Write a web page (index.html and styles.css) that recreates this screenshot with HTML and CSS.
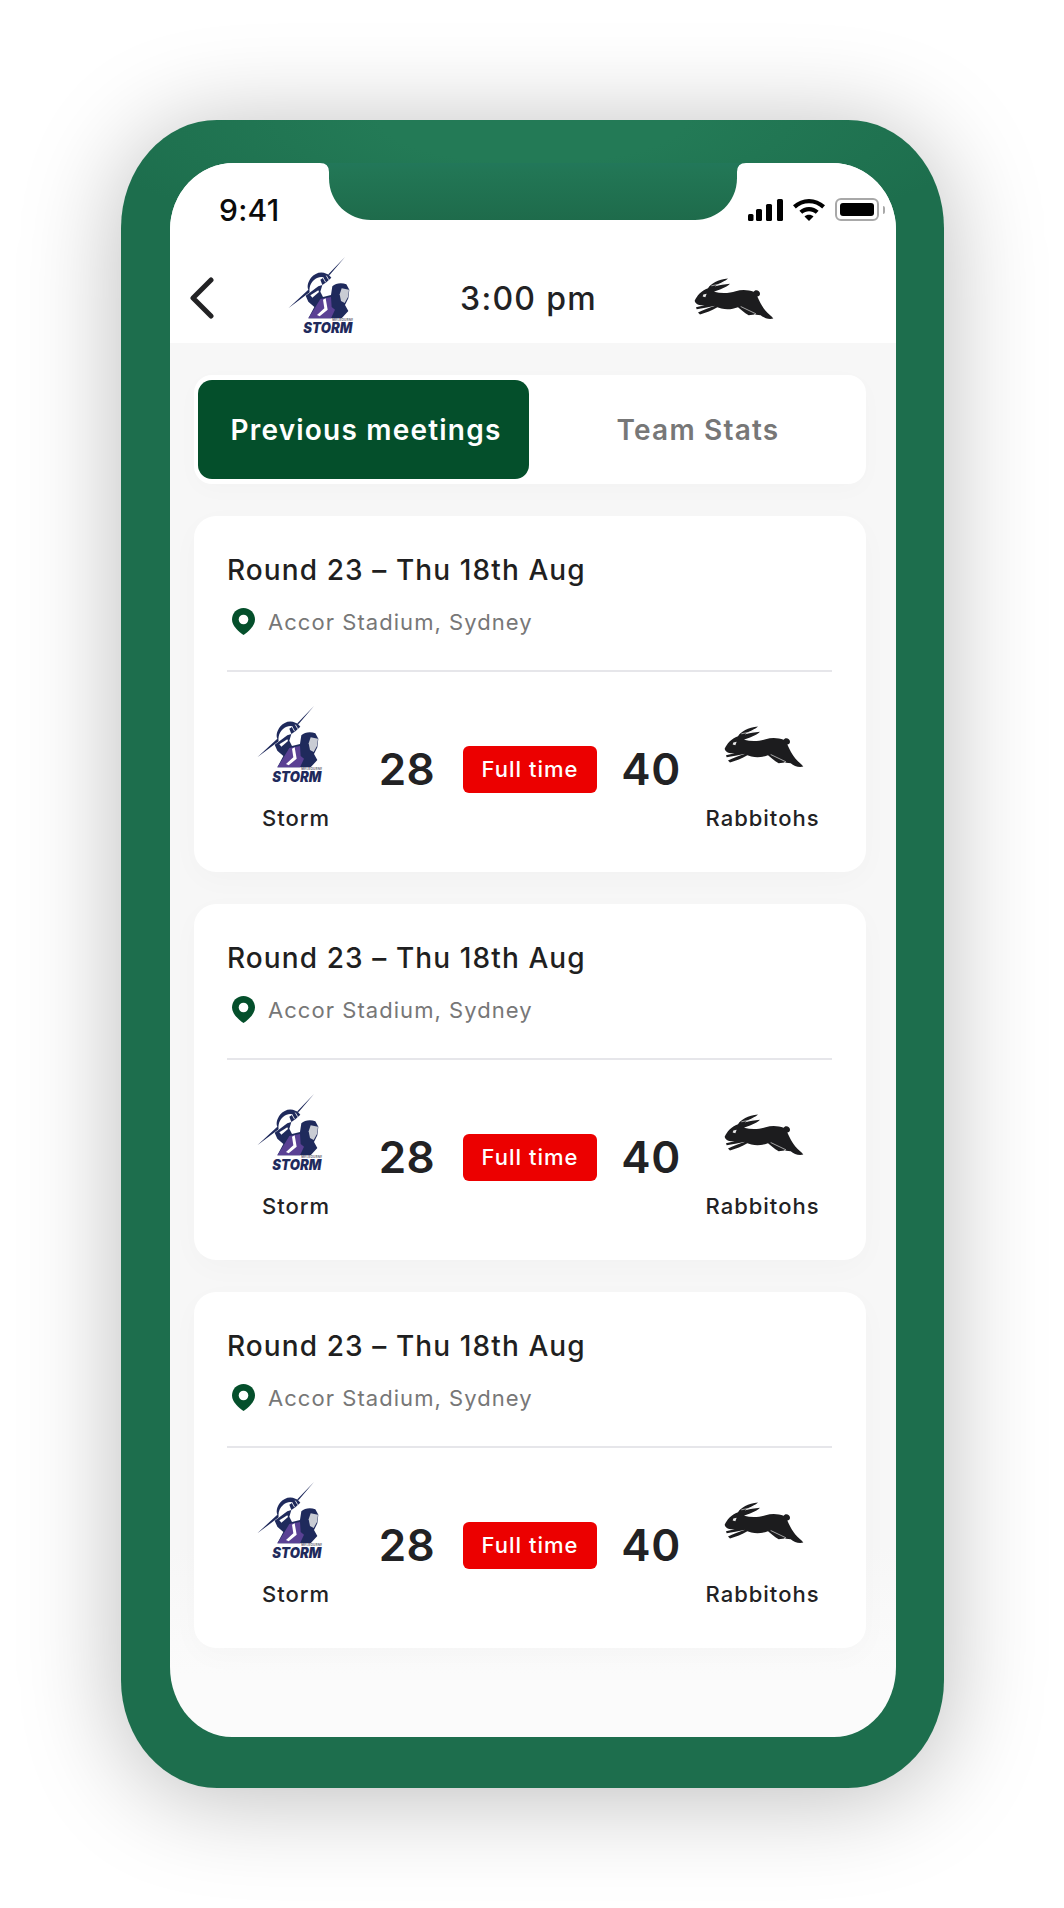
FILE: index.html
```html
<!DOCTYPE html>
<html lang="en">
<head>
<meta charset="utf-8">
<title>Previous meetings</title>
<link rel="stylesheet" href="styles.css">
</head>
<body>
<svg class="defs" width="0" height="0" aria-hidden="true">
  <defs>
    <symbol id="storm" viewBox="195 582 204 240">
      <path fill="#1f2a5c" d="M372 588 L326 642 L316 638 C300 630 282 636 270 650 C260 664 258 676 262 686 L202 742 L266 694 C264 680 268 666 280 656 C290 648 300 646 312 650 Z"/>
      <path fill="#1f2a5c" d="M298 656 L322 640 L331 650 L316 664 L304 672 Z"/>
      <path fill="none" stroke="#fff" stroke-width="2.500" d="M306 650 L314 664 M316 644 L323 656"/>
      <path fill="#1f2a5c" d="M254 704 L292 676 L304 672 L298 692 L306 708 L330 702 L334 676 C344 666 362 664 376 670 L385 686 L382 712 L372 732 L382 750 L362 772 L262 772 L280 738 L262 722 Z"/>
      <path fill="#5a4194" d="M298 714 L330 708 L332 738 L342 746 L330 772 L262 772 L282 740 Z"/>
      <path fill="#c9ccd4" d="M362 682 L384 686 L381 708 L371 726 L360 720 L356 700 Z"/>
      <path fill="#fff" d="M268 703 L292 688 L294 693 L274 710 Z"/>
      <path fill="#fff" d="M306 716 L314 712 L320 746 L296 766 L288 762 L310 742 Z"/>
      <text class="logo-small" x="334" y="781" textLength="62">MELBOURNE</text>
      <text class="logo-word" x="247" y="817" textLength="147" lengthAdjust="spacingAndGlyphs">STORM</text>
    </symbol>
    <symbol id="rabbit" viewBox="40 34 240 128">
      <path fill="#1c1c1e" d="M42 105 C48 90 62 74 82 67 C90 54 112 40 142 38 C134 46 116 52 102 62 C116 58 132 56 148 54 C136 66 114 72 100 78 C124 84 148 82 165 76 C184 70 204 72 219 78 C222 70 238 72 238 84 C238 90 234 92 230 92 C236 106 244 122 254 134 C262 144 272 150 278 158 C264 162 250 156 240 148 C222 148 206 140 192 128 L222 146 L204 148 C190 140 180 130 172 124 C156 130 140 132 122 128 L110 124 C94 134 76 140 58 146 L52 140 C66 134 86 126 104 120 L74 126 L48 130 L46 124 L72 118 C58 120 44 116 42 105 Z"/>
      <path fill="#e8e8e8" d="M68 86 L78 84 L74 94 L66 92 Z"/>
      <path fill="none" stroke="#e8e8e8" stroke-width="2" d="M180 122 L226 144 M92 60 L130 52"/>
    </symbol>
    <symbol id="pin" viewBox="0 0 23 27">
      <path fill="#044f2b" d="M11.5 0 C18 0 23 5 23 11.5 C23 18 16 24 11.5 27 C7 24 0 18 0 11.5 C0 5 5 0 11.5 0 Z"/>
      <circle fill="#fff" cx="11.5" cy="11.5" r="4.8"/>
    </symbol>
    <linearGradient id="notchfill" x1="0" y1="0" x2="0" y2="1">
      <stop offset="0" stop-color="#22775a"/>
      <stop offset="0.15" stop-color="#227655"/>
      <stop offset="1" stop-color="#1e6b4b"/>
    </linearGradient>
  </defs>
</svg>

<div class="stage">
  <div class="phone">
    <div class="screen">
      <svg class="notch" viewBox="0 0 426 57" width="426" height="57" aria-hidden="true">
        <path fill="url(#notchfill)" d="M0 0 Q9 0 9 9 V15 C9 40 29 57 51 57 H375 C397 57 417 40 417 15 V9 Q417 0 426 0 Z"/>
      </svg>

      <header class="top">
        <div class="status">
          <span class="clock">9:41</span>
          <div class="status-icons">
            <svg class="signal" viewBox="0 0 35 22" width="35" height="22" aria-hidden="true">
              <rect x="0" y="15" width="5.5" height="7" rx="1.5"/>
              <rect x="8" y="10" width="6" height="12" rx="1.5"/>
              <rect x="18" y="5" width="6" height="17" rx="1.5"/>
              <rect x="29" y="0" width="6" height="22" rx="1.5"/>
            </svg>
            <svg class="wifi" viewBox="0 0 32 22" width="32" height="22" aria-hidden="true">
              <path d="M16 0 C22 0 27.500 2.300 32 6.300 L29.200 9.400 C25.600 6.200 21 4.300 16 4.300 C11 4.300 6.400 6.200 2.800 9.400 L0 6.300 C4.500 2.300 10 0 16 0 Z"/>
              <path d="M16 8 C19.700 8 23 9.400 25.600 11.700 L22.800 14.800 C21 13.200 18.600 12.200 16 12.200 C13.400 12.200 11 13.200 9.200 14.800 L6.400 11.700 C9 9.400 12.300 8 16 8 Z"/>
              <path d="M16 15.800 C17.800 15.800 19.300 16.400 20.500 17.500 L16 22 L11.500 17.500 C12.700 16.400 14.200 15.800 16 15.800 Z"/>
            </svg>
            <div class="battery"><span class="battery-level"></span></div>
            <span class="battery-nub"></span>
          </div>
        </div>
        <nav class="nav">
          <svg class="back" viewBox="0 0 24 42" width="24" height="42" aria-hidden="true">
            <path d="M21 3 L3 21 L21 39" fill="none" stroke="#222224" stroke-width="5" stroke-linecap="round" stroke-linejoin="round"/>
          </svg>
          <svg class="crest" width="68" height="80" aria-hidden="true"><use href="#storm"/></svg>
          <span class="kick">3:00 pm</span>
          <svg class="hare" width="80" height="43" aria-hidden="true"><use href="#rabbit"/></svg>
        </nav>
      </header>

      <main class="body">
        <div class="tabs">
          <button class="tab tab-on">Previous meetings</button>
          <button class="tab">Team Stats</button>
        </div>

        <article class="card">
          <h2 class="round">Round 23 – Thu 18th Aug</h2>
          <p class="venue"><svg width="23" height="27" aria-hidden="true"><use href="#pin"/></svg>Accor Stadium, Sydney</p>
          <div class="match">
            <div class="team">
              <div class="team-mark"><svg width="68" height="80" aria-hidden="true"><use href="#storm"/></svg></div>
              <span class="team-name">Storm</span>
            </div>
            <span class="score score-home">28</span>
            <span class="badge">Full time</span>
            <span class="score score-away">40</span>
            <div class="team">
              <div class="team-mark team-mark-hare"><svg width="80" height="43" aria-hidden="true"><use href="#rabbit"/></svg></div>
              <span class="team-name">Rabbitohs</span>
            </div>
          </div>
        </article>

        <article class="card">
          <h2 class="round">Round 23 – Thu 18th Aug</h2>
          <p class="venue"><svg width="23" height="27" aria-hidden="true"><use href="#pin"/></svg>Accor Stadium, Sydney</p>
          <div class="match">
            <div class="team">
              <div class="team-mark"><svg width="68" height="80" aria-hidden="true"><use href="#storm"/></svg></div>
              <span class="team-name">Storm</span>
            </div>
            <span class="score score-home">28</span>
            <span class="badge">Full time</span>
            <span class="score score-away">40</span>
            <div class="team">
              <div class="team-mark team-mark-hare"><svg width="80" height="43" aria-hidden="true"><use href="#rabbit"/></svg></div>
              <span class="team-name">Rabbitohs</span>
            </div>
          </div>
        </article>

        <article class="card">
          <h2 class="round">Round 23 – Thu 18th Aug</h2>
          <p class="venue"><svg width="23" height="27" aria-hidden="true"><use href="#pin"/></svg>Accor Stadium, Sydney</p>
          <div class="match">
            <div class="team">
              <div class="team-mark"><svg width="68" height="80" aria-hidden="true"><use href="#storm"/></svg></div>
              <span class="team-name">Storm</span>
            </div>
            <span class="score score-home">28</span>
            <span class="badge">Full time</span>
            <span class="score score-away">40</span>
            <div class="team">
              <div class="team-mark team-mark-hare"><svg width="80" height="43" aria-hidden="true"><use href="#rabbit"/></svg></div>
              <span class="team-name">Rabbitohs</span>
            </div>
          </div>
        </article>
      </main>
    </div>
  </div>
</div>
</body>
</html>
```

FILE: styles.css
```css
* { box-sizing: border-box; }

html, body {
  margin: 0;
  padding: 0;
  background: #fff;
}

body {
  font-family: Inter, "Liberation Sans", sans-serif;
  color: #1f1f21;
}

.defs { position: absolute; }

.logo-small {
  font: 700 9px Inter, sans-serif;
  fill: #6b6b78;
}

.logo-word {
  font: italic 900 42px Inter, sans-serif;
  fill: #1f2a5c;
}

.stage {
  width: 1064px;
  height: 1908px;
  padding: 120px 0 0 121px;
  overflow: hidden;
}

.phone {
  width: 823px;
  height: 1668px;
  padding: 43px 48px 51px 49px;
  border-radius: 96px / 108px;
  background:
    radial-gradient(ellipse 460px 130px at 50% 0, #237a56 0%, #237a56 33%, rgba(35, 122, 86, 0) 100%),
    #1d6e4d;
  box-shadow: 0 8px 100px rgba(0, 0, 0, 0.27);
}

.screen {
  position: relative;
  height: 1574px;
  border-radius: 64px 64px 62px 62px / 67px 67px 70px 70px;
  background: linear-gradient(#f7f7f7 88%, #fbfbfb 96%);
  overflow: hidden;
}

.notch {
  position: absolute;
  top: 0;
  left: 150px;
}

.top {
  background: #fff;
  height: 180px;
}

.status {
  display: flex;
  justify-content: space-between;
  align-items: flex-start;
  height: 90px;
  padding: 29px 11px 0 49px;
}

.clock {
  font-size: 30px;
  line-height: 36px;
  font-weight: 500;
  letter-spacing: 0.3px;
  color: #0b0b0b;
}

.status-icons {
  display: flex;
  align-items: center;
  padding-top: 6px;
}

.signal, .wifi { fill: #000; }

.signal { margin-right: 10px; }

.wifi { margin-right: 10px; }

.battery {
  width: 44px;
  height: 23px;
  padding: 3px;
  border: 2px solid #a8a8a8;
  border-radius: 6px;
}

.battery-level {
  display: block;
  height: 100%;
  border-radius: 3px;
  background: #000;
}

.battery-nub {
  width: 2px;
  height: 8px;
  margin-left: 4px;
  border-radius: 0 2px 2px 0;
  background: #a8a8a8;
}

.nav {
  display: grid;
  grid-template-columns: 96px 68px 340px 80px;
  align-items: center;
  height: 90px;
  padding-left: 20px;
}

.back { margin-top: -1px; }

.crest { margin-top: -7px; }

.kick {
  padding: 2px 0 0 9px;
  text-align: center;
  font-size: 32px;
  line-height: 40px;
  font-weight: 550;
  letter-spacing: 1.3px;
  color: #222224;
}

.hare { margin-top: 1px; }

.body {
  display: flex;
  flex-direction: column;
  gap: 32px;
  padding: 32px 30px 0 24px;
}

.tabs {
  display: grid;
  grid-template-columns: 331px 1fr;
  height: 109px;
  padding: 5px 4px;
  border-radius: 18px;
  background: #fff;
  box-shadow: 0 6px 24px rgba(0, 0, 0, 0.02);
}

.tab {
  border: 0;
  border-radius: 14px;
  background: transparent;
  font-family: inherit;
  font-size: 28px;
  font-weight: 600;
  letter-spacing: 1.2px;
  color: #777;
  padding: 0 0 0 5px;
}

.tab-on {
  background: #044f2b;
  color: #fff;
}

.card {
  height: 356px;
  padding: 38px 34px 0 33px;
  border-radius: 22px;
  background: #fff;
  box-shadow: 0 8px 30px rgba(0, 0, 0, 0.025);
}

.round {
  margin: 0;
  font-size: 28px;
  line-height: 32px;
  font-weight: 550;
  letter-spacing: 1.1px;
  color: #1f1f21;
}

.venue {
  display: flex;
  align-items: center;
  gap: 13px;
  height: 86px;
  margin: 0;
  padding: 0 0 13px 5px;
  border-bottom: 2px solid #e6e6ea;
  font-size: 22px;
  letter-spacing: 1.05px;
  color: #777;
}

.match {
  display: grid;
  grid-template-columns: 138px 98px 134px 96px 1fr;
  align-items: center;
  margin-top: 32px;
}

.team {
  display: flex;
  flex-direction: column;
  align-items: center;
}

.team-mark {
  display: flex;
  align-items: center;
  height: 80px;
  margin: 0 14px 19px 0;
}

.team-mark-hare {
  margin: 2px 0 17px 3px;
}

.team-name {
  font-size: 22px;
  line-height: 30px;
  font-weight: 550;
  letter-spacing: 1px;
  color: #222224;
}

.score {
  text-align: center;
  font-size: 44px;
  line-height: 56px;
  font-weight: 600;
  letter-spacing: 0.5px;
  color: #222224;
}

.score-home { padding-right: 14px; }

.score-away { padding-left: 12px; }

.badge {
  height: 47px;
  margin-top: 1px;
  border-radius: 6px;
  background: #ec0000;
  color: #fff;
  text-align: center;
  font-size: 22px;
  line-height: 46px;
  font-weight: 550;
  letter-spacing: 1px;
}
```
